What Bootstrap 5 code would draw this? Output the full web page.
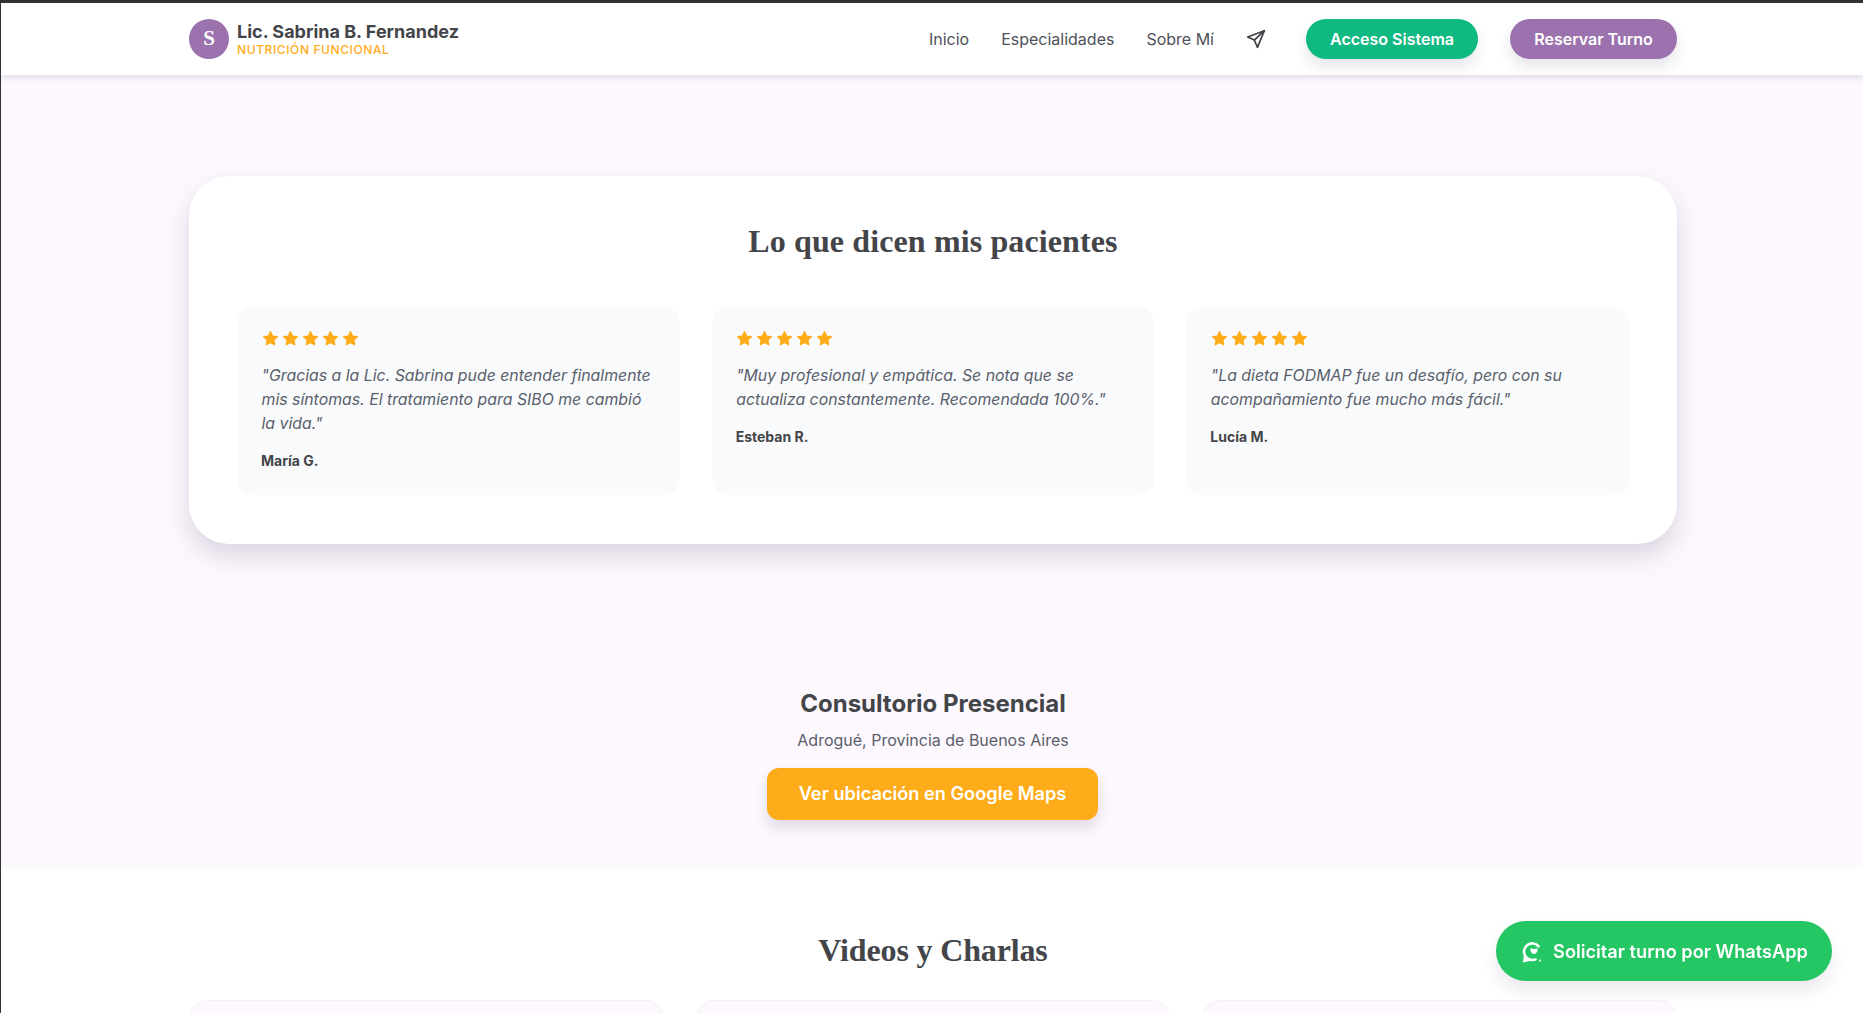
<!DOCTYPE html>
<html lang="es">
<head>
    <meta charset="UTF-8">
    <title>Lic. Sabrina B. Fernandez</title>
    <link href="https://cdn.jsdelivr.net/npm/bootstrap@5.3.3/dist/css/bootstrap.min.css" rel="stylesheet">
    <style>
    html, body { height: 100%; overflow: hidden; }
    body {
      font-family: Inter, "Liberation Sans", sans-serif;
      color: #434549;
      background: #fff;
      border-top: 3px solid #333;
      border-left: 1px solid #333;
    }
    .serif-title { font-family: "Liberation Serif", serif; font-weight: 700; color: #434549; }
    .wrap-site { width: 1488px; margin-left: 188px; }
    .top-bar { height: 72px; background: #fff; box-shadow: 0 2px 6px rgba(60, 40, 80, .16); position: relative; z-index: 2; }
    .logo-circle { width: 40px; height: 40px; background: #9b72ae; color: #fff; font-size: 21px; }
    .brand-text { padding-top: 2px; }
    .brand-name { font-size: 18px; font-weight: 700; line-height: 20px; color: #434549; }
    .brand-sub { font-size: 12px; font-weight: 500; line-height: 16px; letter-spacing: .6px; color: #ffac1a; }
    .menu-link { font-size: 16px; color: #4f5159; text-decoration: none; }
    .ms-wide { margin-left: 32px; }
    .ms-wider { margin-left: 40px; }
    .pill-btn { height: 40px; border-radius: 20px; color: #fff; font-size: 16px; font-weight: 600; border: 0; box-shadow: 0 8px 14px rgba(60, 40, 80, .12); }
    .pill-green { width: 172px; background: #10b981; }
    .pill-purple { width: 167px; background: #9b72ae; }
    .soft-band { background: #fcf8fe; height: 793px; padding-top: 101px; }
    .review-panel { background: #fff; height: 368px; border-radius: 40px; padding: 48px; box-shadow: 0 12px 24px rgba(60, 40, 80, .17); }
    .review-title { font-size: 32px; line-height: 34px; letter-spacing: .12px; margin-bottom: 49px; }
    .review-grid { display: grid; grid-template-columns: repeat(3, 1fr); gap: 32px; }
    .review-box { height: 188px; background: #f9fafb; border-radius: 16px; padding: 23px 24px 24px 24.5px; }
    .star-row { height: 17px; gap: 3px; margin-bottom: 17px; }
    .quote-text { font-size: 15.85px; font-style: italic; line-height: 24px; color: #5a5f6c; margin-bottom: 13px; }
    .author-name { font-size: 14px; font-weight: 700; line-height: 24px; color: #434549; margin-left: -.5px; }
    .place-block { margin-top: 144px; }
    .place-title { font-size: 24px; font-weight: 700; line-height: 32px; margin-bottom: 8px; color: #434549; }
    .place-text { font-size: 16px; line-height: 24px; margin-bottom: 16px; color: #5a5f6c; }
    .map-btn { display: inline-block; width: 331px; height: 52px; line-height: 50px; margin-left: -1px; background: #ffac1a; color: #fff; font-size: 18.2px; font-weight: 600; border-radius: 12px; text-decoration: none; box-shadow: 0 8px 14px rgba(60, 40, 80, .14); }
    .video-title { font-size: 32px; line-height: 40px; letter-spacing: -.15px; padding-top: 62px; margin-bottom: 30px; }
    .video-grid { display: grid; grid-template-columns: repeat(3, 1fr); gap: 32px; }
    .video-box { height: 200px; background: #fcf8fe; border: 1px solid #f6f1f8; border-radius: 18px; }
    .wa-float { position: fixed; right: 31px; bottom: 32px; width: 336px; height: 60px; padding: 2px 0 0 2px; gap: 11px; border-radius: 30px; background: #25c764; color: #fff; font-size: 18.2px; font-weight: 600; text-decoration: none; box-shadow: 0 10px 16px rgba(60, 40, 80, .1); z-index: 5; }
    </style>
</head>
<body>

    <header class="top-bar">
        <nav class="wrap-site h-100 d-flex align-items-center justify-content-between">
            <a href="#" class="d-flex align-items-center gap-2 text-decoration-none">
                <span class="logo-circle serif-title rounded-circle d-flex align-items-center justify-content-center">S</span>
                <span class="brand-text d-flex flex-column">
                    <span class="brand-name">Lic. Sabrina B. Fernandez</span>
                    <span class="brand-sub">NUTRICIÓN FUNCIONAL</span>
                </span>
            </a>
            <div class="d-flex align-items-center">
                <a href="#" class="menu-link">Inicio</a>
                <a href="#" class="menu-link ms-wide">Especialidades</a>
                <a href="#" class="menu-link ms-wide">Sobre Mí</a>
                <a href="#" class="menu-link ms-wide d-flex">
                    <svg width="20" height="20" viewBox="0 0 24 24" fill="none" stroke="#3f4145" stroke-width="2" stroke-linejoin="round" stroke-linecap="round"><path d="M22 2 2 9.500l8 3.800L13.800 22 22 2Z"/><path d="M22 2 10 13.300"/></svg>
                </a>
                <button class="pill-btn pill-green ms-wider" type="button">Acceso Sistema</button>
                <button class="pill-btn pill-purple ms-wide" type="button">Reservar Turno</button>
            </div>
        </nav>
    </header>

    <main>
        <section class="soft-band">
            <div class="wrap-site">
                <div class="review-panel">
                    <h2 class="serif-title review-title text-center">Lo que dicen mis pacientes</h2>
                    <div class="review-grid" id="reviews"></div>
                </div>
                <div class="place-block text-center">
                    <h3 class="place-title">Consultorio Presencial</h3>
                    <p class="place-text">Adrogué, Provincia de Buenos Aires</p>
                    <a href="#" class="map-btn">Ver ubicación en Google Maps</a>
                </div>
            </div>
        </section>

        <section class="wrap-site">
            <h2 class="serif-title video-title text-center">Videos y Charlas</h2>
            <div class="video-grid">
                <div class="video-box"></div>
                <div class="video-box"></div>
                <div class="video-box"></div>
            </div>
        </section>
    </main>

    <a href="#" class="wa-float d-flex align-items-center justify-content-center">
        <svg width="20" height="21" viewBox="0 0 20 21">
            <path fill="none" stroke="#fff" stroke-width="2.600" stroke-linecap="round" d="M16.600 4.300A8.300 8.300 0 1 0 13.500 17.400"/>
            <path fill="#fff" d="M2.200 12.500.8 20.500l8-1.800z"/>
            <path fill="#fff" d="M8.700 6.400c1.300-.6 1.900.7 3.300.7s2-1.300 3.300-.7c.9 3.100-1.200 5.200-3.300 5.600-2.100-.4-4.200-2.500-3.300-5.600z"/>
            <circle fill="#fff" cx="18" cy="18.500" r="1"/>
        </svg>
        <span>Solicitar turno por WhatsApp</span>
    </a>

    <script src="https://cdn.jsdelivr.net/npm/bootstrap@5.3.3/dist/js/bootstrap.bundle.min.js"></script>
    <script>
        const opiniones = [
            { texto: '"Gracias a la Lic. Sabrina pude entender finalmente mis síntomas. El tratamiento para SIBO me cambió la vida."', autor: "María G." },
            { texto: '"Muy profesional y empática. Se nota que se actualiza constantemente. Recomendada 100%."', autor: "Esteban R." },
            { texto: '"La dieta FODMAP fue un desafío, pero con su acompañamiento fue mucho más fácil."', autor: "Lucía M." }
        ];
        const estrella = '<svg width="17" height="17" viewBox="0 0 24 24"><path fill="#ffac1a" stroke="#ffac1a" stroke-width="2" stroke-linejoin="round" d="m12 2.500 2.900 6.200 6.700.8-5 4.600 1.300 6.700-5.900-3.300-5.900 3.300 1.300-6.700-5-4.600 6.700-.8L12 2.500Z"/></svg>';
        document.getElementById("reviews").innerHTML = opiniones.map(o => `
            <article class="review-box">
                <div class="star-row d-flex">${estrella.repeat(5)}</div>
                <p class="quote-text">${o.texto}</p>
                <div class="author-name">${o.autor}</div>
            </article>`).join("");
    </script>
</body>
</html>
